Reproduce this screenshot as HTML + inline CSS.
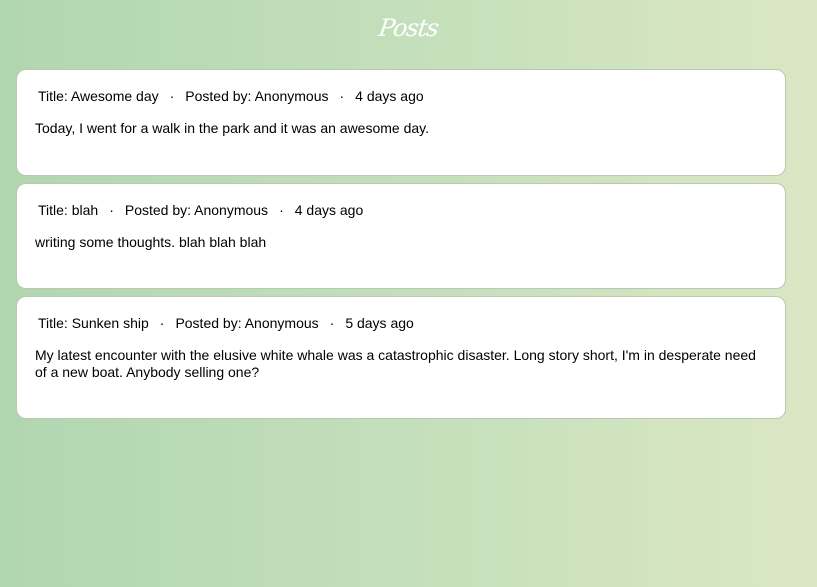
<!DOCTYPE html>
<html><head><style>
html,body{margin:0;height:100%}
body{width:817px;height:587px;background:linear-gradient(90deg,#b0d6b0 0%,#c4dfbb 50%,#dbe7c4 100%);font-family:"Liberation Sans",sans-serif;color:#000;overflow:hidden;position:relative}
h1{position:absolute;top:14px;left:0;width:817px;text-align:center;margin:0;font:italic 24px "DejaVu Serif",serif;color:#fff;letter-spacing:-1px;transform:skewX(-8deg)}
.card{position:absolute;left:16px;width:770px;background:#fff;border:1px solid #b9c9b2;border-radius:10px;box-sizing:border-box;font-size:14px}
.meta{position:absolute;left:21px;top:18px;white-space:nowrap}
.meta span.d{margin:0 11px}
.body{position:absolute;left:18px;top:50px;right:22px;line-height:17px}
</style></head><body>
<h1>Posts</h1>
<div class="card" style="top:69px;height:107px"><div class="meta">Title: Awesome day<span class="d">·</span>Posted by: Anonymous<span class="d">·</span>4 days ago</div><div class="body">Today, I went for a walk in the park and it was an awesome day.</div></div>
<div class="card" style="top:183px;height:106px"><div class="meta">Title: blah<span class="d">·</span>Posted by: Anonymous<span class="d">·</span>4 days ago</div><div class="body">writing some thoughts. blah blah blah</div></div>
<div class="card" style="top:296px;height:123px"><div class="meta">Title: Sunken ship<span class="d">·</span>Posted by: Anonymous<span class="d">·</span>5 days ago</div><div class="body">My latest encounter with the elusive white whale was a catastrophic disaster. Long story short, I'm in desperate need<br>of a new boat. Anybody selling one?</div></div>
</body></html>
